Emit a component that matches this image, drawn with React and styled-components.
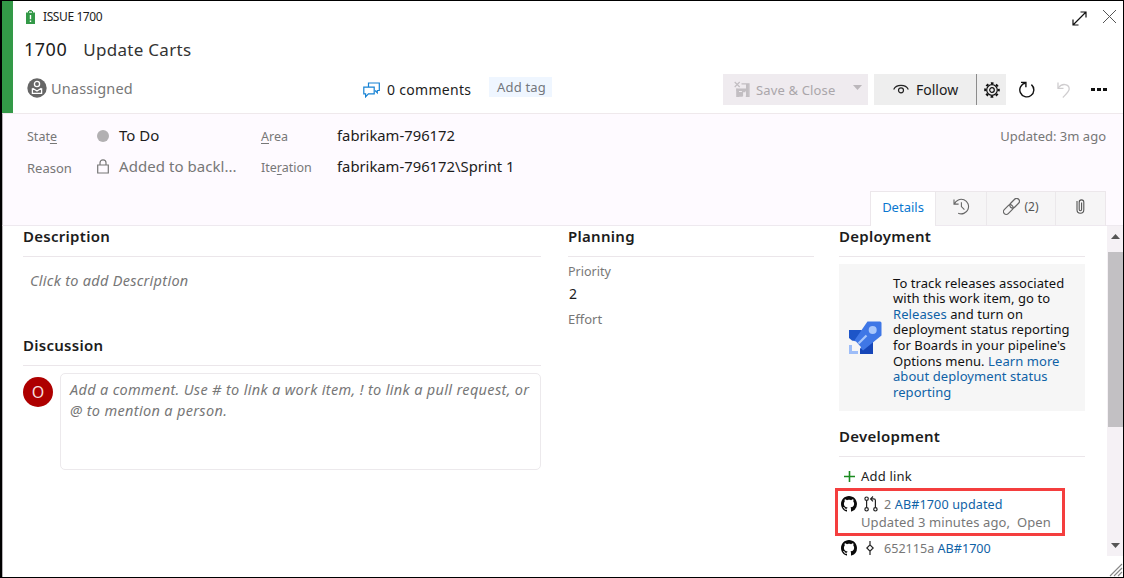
import React from "react";
import styled, { createGlobalStyle } from "styled-components";

const Global = createGlobalStyle`
  * { box-sizing: border-box; }
  body { margin: 0; background: #fff; font-family: "Noto Sans", "Open Sans", sans-serif; }
  svg { display: block; flex: none; }
`;

const Dialog = styled.main`
  position: relative;
  width: 1124px;
  height: 578px;
  overflow: hidden;
  background: #fff;
  border: solid #000;
  border-width: 1px 1px 1px 2px;
  color: #1c1c1c;
  display: flex;
  flex-direction: column;
`;

const Text = styled.span`
  font-size: ${(p) => p.$size || 13}px;
  letter-spacing: ${(p) => p.$track || 0}px;
  color: ${(p) => p.$color || "inherit"};
  font-style: ${(p) => (p.$italic ? "italic" : "normal")};
  padding-bottom: ${(p) => p.$lift || 0}px;
  white-space: pre;
`;

const Header = styled.header`
  height: 112px;
  flex: none;
  display: flex;
  border-left: 11px solid #339947;
`;
const HeaderMain = styled.div`
  flex: 1;
  display: flex;
  flex-direction: column;
`;
const Line = styled.div`
  display: flex;
  align-items: center;
  height: ${(p) => p.$h}px;
  padding-left: ${(p) => p.$pl || 0}px;
  padding-right: ${(p) => p.$pr || 0}px;
  gap: ${(p) => p.$gap || 0}px;
`;
const WindowButtons = styled.div`
  display: flex;
  align-items: center;
  gap: 15px;
  margin-left: auto;
  svg:first-child { margin-top: 2px; }
  svg:last-child { margin-bottom: 1px; }
`;
const Comments = styled.div`
  display: flex;
  align-items: center;
  gap: 7px;
  width: 126px;
`;
const Assignee = styled.div`
  display: flex;
  align-items: center;
  gap: 4px;
  width: 336px;
  padding-bottom: 3px;
`;
const Tag = styled.div`
  width: 63px;
  height: 20px;
  padding-left: 8px;
  margin-bottom: 5px;
  background: #eff6ff;
  display: flex;
  align-items: center;
`;
const Toolbar = styled.div`
  margin-left: auto;
  display: flex;
  align-items: center;
`;
const SaveButton = styled.div`
  display: flex;
  align-items: center;
  width: 145px;
  height: 31px;
  padding: 0 6px 0 11px;
  gap: 6px;
  background: #efebef;
  margin-right: 6px;
  svg:last-child { margin: -5px 0 0 auto; }
`;
const FollowButton = styled.div`
  display: flex;
  align-items: center;
  width: 103px;
  height: 31px;
  padding-left: 19px;
  gap: 7px;
  background: #eee;
  border-right: 1px solid #8c8c8c;
`;
const GearButton = styled.div`
  width: 29px;
  height: 31px;
  background: #eee;
  display: flex;
  align-items: center;
  justify-content: center;
`;
const PlainButtons = styled.div`
  display: flex;
  align-items: center;
  gap: 21px;
  padding-left: 13px;
`;

const Info = styled.section`
  height: 113px;
  flex: none;
  background: #fefaff;
  border-top: 1px solid #efe9ec;
  border-bottom: 1px solid #eee9ef;
  border-left: 1px solid #b5b2b5;
  display: flex;
  padding: 7px 0 0 24px;
`;
const FieldGroup = styled.div`
  width: ${(p) => p.$w}px;
`;
const Field = styled.div`
  display: flex;
  align-items: center;
  height: 31px;
`;
const Label = styled.div`
  width: ${(p) => p.$w}px;
  font-size: ${(p) => p.$size || 12.5}px;
  color: #777;
  u { text-underline-offset: 2px; }
`;
const Marker = styled.div`
  width: 22px;
  display: flex;
  padding-bottom: 2px;
`;
const Dot = styled.i`
  width: 12px;
  height: 12px;
  border-radius: 50%;
  background: #b2b0b2;
`;
const InfoRight = styled.div`
  margin-left: auto;
  display: flex;
  flex-direction: column;
  justify-content: space-between;
  align-items: flex-end;
  padding-right: 17px;
`;
const Tabs = styled.nav`
  display: flex;
  height: 35px;
  margin-bottom: -1px;
  border: solid #ece7eb;
  border-width: 1px 1px 0 1px;
`;
const Tab = styled.div`
  width: ${(p) => p.$w}px;
  display: flex;
  align-items: center;
  justify-content: center;
  gap: 4px;
  padding-bottom: 4px;
  background: ${(p) => (p.$active ? "#fff" : "#f6f5f6")};
  border-bottom: 1px solid ${(p) => (p.$active ? "#fff" : "#eee9ef")};
  border-left: ${(p) => (p.$active ? 0 : 1)}px solid #ebe8eb;
`;

const Body = styled.section`
  flex: 1;
  display: flex;
  border-left: 1px solid #b5b2b5;
  padding-left: 20px;
  min-height: 0;
`;
const Column = styled.div`
  width: ${(p) => p.$w}px;
  margin-right: ${(p) => p.$mr || 0}px;
  display: flex;
  flex-direction: column;
`;
const SectionTitle = styled.h2`
  margin: 0;
  flex: none;
  height: 31px;
  font-size: 15px;
  line-height: 20px;
  font-weight: 600;
  letter-spacing: 0.28px;
  border-bottom: 1px solid #ebe6ea;
`;
const DescriptionArea = styled.div`
  height: 78px;
  padding: 12px 0 0 7px;
`;
const CommentRow = styled.div`
  display: flex;
  padding-top: 7px;
  gap: 7px;
`;
const Avatar = styled.div`
  width: 30px;
  height: 30px;
  margin-top: 4px;
  border-radius: 50%;
  background: #ae0000;
  color: #f6dede;
  font-size: 16px;
  display: flex;
  align-items: center;
  justify-content: center;
`;
const CommentBox = styled.div`
  flex: 1;
  height: 97px;
  border: 1px solid #ece9ec;
  border-radius: 5px;
  padding: 5px 0 0 9px;
  line-height: 20.5px;
  display: flex;
  flex-direction: column;
`;
const ReleaseCard = styled.div`
  height: 147px;
  margin: 7px 0 15px;
  background: #f6f6f6;
  display: flex;
  align-items: center;
  padding-left: 10px;
  gap: 11px;
`;
const ReleaseText = styled.p`
  margin: 1px 0 0;
  font-size: 13px;
  line-height: 15.6px;
  letter-spacing: 0.07px;
  color: #111;
  white-space: nowrap;
`;
const Link = styled.a`
  color: #0f62a6;
`;
const LinkRow = styled.div`
  display: flex;
  align-items: center;
  height: ${(p) => p.$h}px;
  padding-left: ${(p) => p.$pl || 0}px;
  font-size: 12.6px;
  letter-spacing: ${(p) => p.$track || 0}px;
  color: #777;
  white-space: pre;
`;
const IconCell = styled.span`
  width: ${(p) => p.$w}px;
  display: flex;
`;
const DevList = styled.div`
  padding-top: 8px;
`;
const Highlight = styled.div`
  position: absolute;
  left: 833px;
  top: 487px;
  width: 230px;
  height: 48px;
  border: 3px solid #f43e3e;
`;
const ScrollBar = styled.div`
  width: 16px;
  height: 330px;
  margin-left: auto;
  background: #f5f1f5;
  display: flex;
  flex-direction: column;
  align-items: center;
  padding: 8px 0;
`;
const Thumb = styled.div`
  width: 15px;
  height: 175px;
  margin: 13px 0 auto 1px;
  background: #c2c0c3;
`;
const Grip = styled.div`
  position: absolute;
  right: 0;
  bottom: 0;
`;

const S = ({ w, h, vb, c = "#222", sw = 1, children }) => (
  <svg width={w} height={h} viewBox={vb || `0 0 ${w} ${h}`} fill="none" stroke={c} strokeWidth={sw}>
    {children}
  </svg>
);

const IssueIcon = () => (
  <S w={9} h={14} c="none">
    <path d="M0 2.5h2V1h1.2V0h2.6v1H7v1.5h2V14H0z" fill="#339947" />
    <path d="M3 2.2h3" stroke="#fff" />
    <path d="M4.5 5v4.2M4.5 10.5V12" stroke="#fff" strokeWidth="1.4" />
  </S>
);
const PersonIcon = () => (
  <S w={20} h={20} c="none">
    <circle cx="10" cy="10" r="9.7" fill="#666" />
    <circle cx="10" cy="6" r="2.6" stroke="#fff" strokeWidth="1.3" />
    <path d="M5.4 10.2v5.2h9.2v-5.2M5.6 10.3l4.4 2.8 4.4-2.8" stroke="#fff" strokeWidth="1.3" />
  </S>
);
const ChatIcon = () => (
  <S w={17} h={16} c="#1682d4" sw={1.2}>
    <path d="M5.5 5V1h10.8v7.5h-2v2.3l-2.3-2.3" />
    <path d="M.8 5.2h10.4v6.6H5.4L2.6 14.8v-3H.8z" />
  </S>
);
const SaveIcon = () => (
  <S w={16} h={17} c="#c2bec2" sw={1.2}>
    <path d="M.7 1l5 5M5.7 1l-5 5" />
    <path d="M7.5 2.8H15v12.5h-3.2M2.8 7.5v7.8h2.5" />
    <path d="M2.5 7.5h10v2.5h-10zM12 3h2.8v12.3H12zM5 11h3.5v4.8H5zM3 10h2v5H3z" fill="#c2bec2" stroke="none" />
    <path d="M8.5 15.2v-4.5h3" />
  </S>
);
const EyeIcon = () => (
  <S w={16} h={11} c="#222" sw={1.2}>
    <path d="M.7 5.5C3.2 0 12.8 0 15.3 5.5" />
    <circle cx="8" cy="6.3" r="2.5" />
  </S>
);
const GearIcon = () => (
  <S w={16} h={16} c="#111" sw={1.2}>
    <circle cx="8" cy="8" r="5.3" />
    <circle cx="8" cy="8" r="2.3" />
    <circle cx="8" cy="8" r="6.8" strokeWidth="2" strokeDasharray="2.7 2.64" strokeDashoffset="1.35" />
  </S>
);
const RefreshIcon = () => (
  <S w={17} h={17} c="#111" sw={1.4}>
    <path d="M2 1.4h4.9v4.9" />
    <path d="M6.6 2A7 7 0 1 0 12.4 3.6" />
  </S>
);
const UndoIcon = () => (
  <S w={13} h={16} c="#cfcdcf" sw={1.3}>
    <path d="M1 .5v5.8h5.5" />
    <path d="M1.2 6C5 .5 12.2 2 12.2 7c0 2.4-2.6 4.6-6.4 8.5" />
  </S>
);
const LockIcon = () => (
  <S w={12} h={15} c="#777" sw={1.2}>
    <path d="M.7 6h10.6v8H.7zM3 6V3.8a3 3 0 0 1 6 0V6" />
  </S>
);
const HistoryIcon = () => (
  <S w={17} h={17} c="#666" sw={1.1}>
    <path d="M1 1.5v4.6h4.6M1.4 6A7.3 7.3 0 1 1 5.2 15.2M8.4 4.3v4.3l3 3" />
  </S>
);
const ChainIcon = () => (
  <S w={17} h={17} c="#666" sw={1.2}>
    <g transform="rotate(-45 8.5 8.5)">
      <rect x="-1.6" y="5.6" width="11.2" height="5.6" rx="2.8" />
      <rect x="7.4" y="5.6" width="11.2" height="5.6" rx="2.8" />
    </g>
  </S>
);
const ClipIcon = () => (
  <S w={9} h={15} c="#555" sw={1.1}>
    <path d="M1 2v8.8a3.4 3.4 0 0 0 6.8 0V3.2a2.3 2.3 0 0 0-4.6 0v7.4a1.2 1.2 0 0 0 2.4 0V3.5" />
  </S>
);
const RocketIcon = () => (
  <S w={33} h={33} c="none">
    <path d="M0 9h13L8 22H6L0 17z" fill="#1d55c8" />
    <path d="M11 26l13-9v16H11z" fill="#1646b8" />
    <path d="M18.5.5H31a1.5 1.5 0 0 1 1.5 1.5v12.5L14 29.5 5 20z" fill="#3f77e6" />
    <circle cx="23.7" cy="9" r="4" fill="#a9c7fb" />
    <path d="M9.5 22.5l8-8" stroke="#a9c7fb" strokeWidth="2.2" />
    <path d="M3.5 19.5l3.5 1 4.5 5 .5 1.5-4 2-4.5-4.5z" fill="#f6f6f6" />
    <path d="M1.5 24v7.5H9" stroke="#9dbdf8" strokeWidth="3" />
  </S>
);
const GitHubIcon = () => (
  <svg width="16" height="16" viewBox="0 0 16 16" fill="#0a0a0a">
    <path d="M8 0C3.58 0 0 3.58 0 8c0 3.54 2.29 6.53 5.47 7.59.4.07.55-.17.55-.38 0-.19-.01-.82-.01-1.49-2.01.37-2.53-.49-2.69-.94-.09-.23-.48-.94-.82-1.13-.28-.15-.68-.52-.01-.53.63-.01 1.08.58 1.23.82.72 1.21 1.87.87 2.33.66.07-.52.28-.87.51-1.07-1.78-.2-3.64-.89-3.64-3.95 0-.87.31-1.59.82-2.15-.08-.2-.36-1.02.08-2.12 0 0 .67-.21 2.2.82.64-.18 1.32-.27 2-.27s1.36.09 2 .27c1.53-1.04 2.2-.82 2.2-.82.44 1.1.16 1.92.08 2.12.51.56.82 1.27.82 2.15 0 3.07-1.87 3.75-3.65 3.95.29.25.54.73.54 1.48 0 1.07-.01 1.93-.01 2.2 0 .21.15.46.55.38A8.01 8.01 0 0 0 16 8c0-4.42-3.58-8-8-8z" />
  </svg>
);
const PullIcon = () => (
  <S w={14} h={16} c="#222" sw={1.2}>
    <circle cx="2.6" cy="2.7" r="1.7" />
    <circle cx="2.6" cy="13.3" r="1.7" />
    <circle cx="11.4" cy="13.3" r="1.7" />
    <path d="M2.6 4.4v7.2M11.4 11.6V4.5c0-1-.6-1.6-1.6-1.6H6.6M9 .5L6.6 2.9 9 5.3" />
  </S>
);
const CommitIcon = () => (
  <S w={8} h={14} c="#222" sw={1.2}>
    <path d="M4 0v4M4 10v4M4 3.8L7.2 7 4 10.2.8 7z" />
  </S>
);

export default function App() {
  return (
    <>
      <Global />
      <Dialog>
        <Header>
          <HeaderMain>
            <Line $h={32} $pl={13} $pr={6} $gap={8}>
              <IssueIcon />
              <Text $size={12} $track={-0.4} $lift={2}>ISSUE 1700</Text>
              <WindowButtons>
                <S w={15} h={15} c="#111" sw={1.2}>
                  <path d="M1.5 13.5l12-12M8.5 1h5.5v5.5M1 8.5V14h5.5" />
                </S>
                <S w={15} h={15} c="#555">
                  <path d="M1 1l13 13M14 1L1 14" />
                </S>
              </WindowButtons>
            </Line>
            <Line $h={34} $pl={11} $gap={16}>
              <Text $size={18} $track={0.5} $lift={3}>1700</Text>
              <Text $size={17} $track={0.3} $lift={1} $color="#333">Update Carts</Text>
            </Line>
            <Line $h={45} $pl={14} $pr={16}>
              <Assignee>
                <PersonIcon />
                <Text $size={14.5} $track={0.15} $lift={1} $color="#777">Unassigned</Text>
              </Assignee>
              <Comments>
                <ChatIcon />
                <Text $size={14} $track={0.3} $lift={1}>0 comments</Text>
              </Comments>
              <Tag><Text $size={13} $track={0.2} $color="#73777d">Add tag</Text></Tag>
              <Toolbar>
                <SaveButton>
                  <SaveIcon />
                  <Text $size={13} $track={0.15} $color="#aaa6aa">Save &amp; Close</Text>
                  <S w={9} h={5} c="none"><path d="M0 0h9L4.5 5z" fill="#bbb7bb" /></S>
                </SaveButton>
                <FollowButton>
                  <EyeIcon />
                  <Text $size={14}>Follow</Text>
                </FollowButton>
                <GearButton><GearIcon /></GearButton>
                <PlainButtons>
                  <RefreshIcon />
                  <UndoIcon />
                  <S w={16} h={3} c="none">
                    <path d="M0 0h4v3H0zM6 0h4v3H6zM12 0h4v3h-4z" fill="#111" />
                  </S>
                </PlainButtons>
              </Toolbar>
            </Line>
          </HeaderMain>
        </Header>
        <Info>
          <FieldGroup $w={234}>
            <Field>
              <Label $w={70}>Stat<u>e</u></Label>
              <Marker><Dot /></Marker>
              <Text $size={15} $lift={3}>To Do</Text>
            </Field>
            <Field>
              <Label $w={70} $size={13}>Reason</Label>
              <Marker><LockIcon /></Marker>
              <Text $size={15} $track={0.05} $lift={3} $color="#777">Added to backl...</Text>
            </Field>
          </FieldGroup>
          <FieldGroup $w={260}>
            <Field>
              <Label $w={76}><u>A</u>rea</Label>
              <Text $size={14.8} $lift={3}>fabrikam-796172</Text>
            </Field>
            <Field>
              <Label $w={76}>Ite<u>r</u>ation</Label>
              <Text $size={14.8} $lift={4}>fabrikam-796172\Sprint 1</Text>
            </Field>
          </FieldGroup>
          <InfoRight>
            <Field><Text $size={13} $lift={2} $color="#777">Updated: 3m ago</Text></Field>
            <Tabs>
              <Tab $w={64} $active><Text $color="#0a78d0">Details</Text></Tab>
              <Tab $w={51}><HistoryIcon /></Tab>
              <Tab $w={69}><ChainIcon /><Text $size={12} $color="#555">(2)</Text></Tab>
              <Tab $w={50}><ClipIcon /></Tab>
            </Tabs>
          </InfoRight>
        </Info>
        <Body>
          <Column $w={518} $mr={27}>
            <SectionTitle>Description</SectionTitle>
            <DescriptionArea>
              <Text $size={14.5} $track={0.28} $italic $color="#777">Click to add Description</Text>
            </DescriptionArea>
            <SectionTitle>Discussion</SectionTitle>
            <CommentRow>
              <Avatar>O</Avatar>
              <CommentBox>
                <Text $size={14.5} $track={0.33} $italic $color="#777">Add a comment. Use # to link a work item, ! to link a pull request, or</Text>
                <Text $size={14.5} $track={0.33} $italic $color="#777">@ to mention a person.</Text>
              </CommentBox>
            </CommentRow>
          </Column>
          <Column $w={246} $mr={25}>
            <SectionTitle>Planning</SectionTitle>
            <Line $h={30}><Text $size={12.5} $lift={2} $color="#777">Priority</Text></Line>
            <Line $h={15} $pl={1}><Text $size={14} $lift={2}>2</Text></Line>
            <Line $h={36}><Text $size={13} $lift={2} $color="#777">Effort</Text></Line>
          </Column>
          <Column $w={246}>
            <SectionTitle>Deployment</SectionTitle>
            <ReleaseCard>
              <RocketIcon />
              <ReleaseText>
                To track releases associated<br />
                with this work item, go to<br />
                <Link>Releases</Link> and turn on<br />
                deployment status reporting<br />
                for Boards in your pipeline's<br />
                Options menu. <Link>Learn more<br />
                about deployment status<br />
                reporting</Link>
              </ReleaseText>
            </ReleaseCard>
            <SectionTitle>Development</SectionTitle>
            <DevList>
              <LinkRow $h={22} $pl={5}>
                <IconCell $w={17}>
                  <S w={11} h={11} c="#1a8a1f" sw={1.6}><path d="M5.5 0v11M0 5.5h11" /></S>
                </IconCell>
                <Text $track={0.2} $lift={1} $color="#222">Add link</Text>
              </LinkRow>
              <LinkRow $h={34} $pl={2} $track={0.12}>
                <IconCell $w={23}><GitHubIcon /></IconCell>
                <IconCell $w={20}><PullIcon /></IconCell>
                2 <Link>AB#1700 updated</Link>
              </LinkRow>
              <LinkRow $h={2} $pl={22}>
                <Text $color="#777" $track={0.1}>{"Updated 3 minutes ago,  Open"}</Text>
              </LinkRow>
              <LinkRow $h={50} $pl={2}>
                <IconCell $w={25}><GitHubIcon /></IconCell>
                <IconCell $w={18}><CommitIcon /></IconCell>
                652115a <Link>AB#1700</Link>
              </LinkRow>
            </DevList>
          </Column>
          <ScrollBar>
            <S w={9} h={5} c="none"><path d="M0 5h9L4.5 0z" fill="#555" /></S>
            <Thumb />
            <S w={9} h={5} c="none"><path d="M0 0h9L4.5 5z" fill="#555" /></S>
          </ScrollBar>
        </Body>
        <Highlight />
        <Grip>
          <S w={14} h={14} c="#888" sw={1.1}><path d="M1 13L13 1M5 13l8-8M9 13l4-4" /></S>
        </Grip>
      </Dialog>
    </>
  );
}
